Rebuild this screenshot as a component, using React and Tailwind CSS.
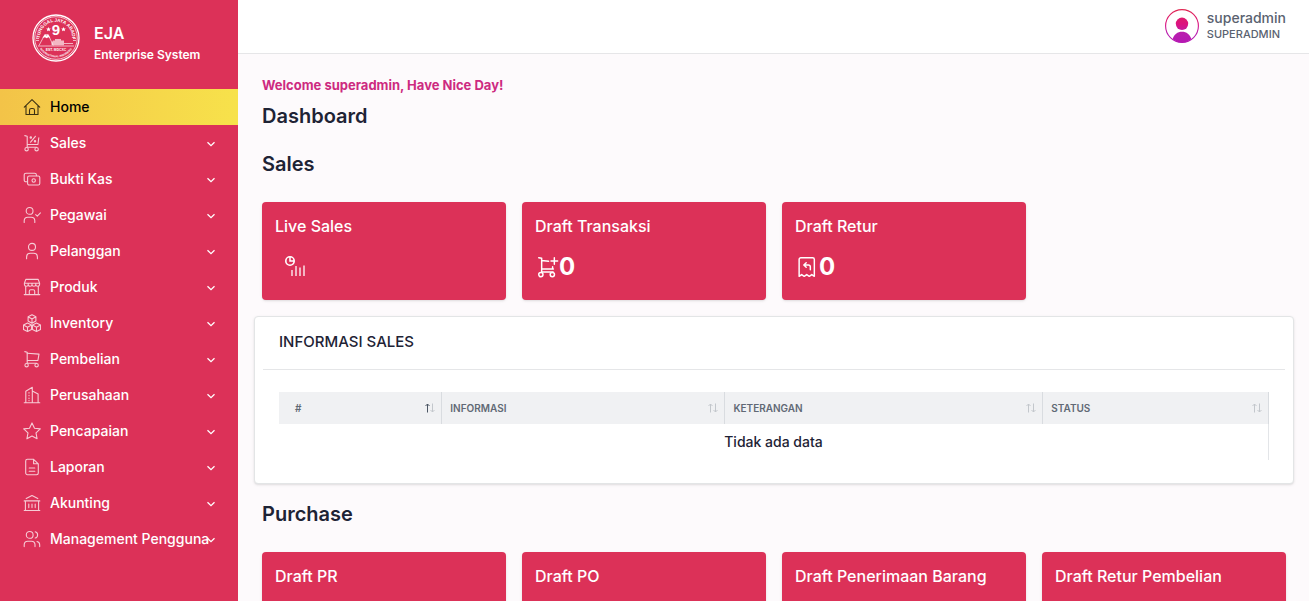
import React from "react";

function Icon({ children, className = "size-[18px]" }) {
  return (
    <svg
      viewBox="0 0 18 18"
      className={`shrink-0 ${className}`}
      fill="none"
      stroke="currentColor"
      strokeWidth="1.1"
      strokeLinecap="round"
      strokeLinejoin="round"
      aria-hidden="true"
    >
      {children}
    </svg>
  );
}

const cartBase = (
  <>
    <path d="M1.8 1.6 4.2 2.2V13.2M4.2 10.5H14.6M4.2 13.2H13.6" />
    <circle cx="3.6" cy="15.2" r="1.7" />
    <circle cx="13.6" cy="15.2" r="1.7" />
  </>
);

const icons = {
  home: <path d="M1.3 9.2 9 1.6l7.7 7.6M3 7.8v8.7h12V7.8M6.5 16.5v-4.2a1.8 1.8 0 0 1 1.8-1.8h1.4a1.8 1.8 0 0 1 1.8 1.8v4.2" />,
  sales: (
    <>
      {cartBase}
      <path d="M15.8 3.8 14.9 10.5M7.6 8.2l4.8-5.9" />
      <circle cx="7.8" cy="3.4" r=".7" />
      <circle cx="12" cy="7.3" r=".7" />
    </>
  ),
  cash: (
    <>
      <path d="M4.5 11.8H3A1.8 1.8 0 0 1 1.2 10V5A1.8 1.8 0 0 1 3 3.2h8.6A1.8 1.8 0 0 1 13.4 5v.6" />
      <rect x="4.6" y="6" width="12.2" height="9" rx="1.6" />
      <circle cx="10.7" cy="10.5" r="1.7" />
    </>
  ),
  employee: (
    <>
      <circle cx="6.6" cy="4.9" r="3.4" />
      <path d="M1.2 16.5v-1.8a3.6 3.6 0 0 1 3.6-3.5h3.4a3.6 3.6 0 0 1 3.6 3.5v1.8M12.7 8.6l1.6 1.5 3.1-3.2" />
    </>
  ),
  customer: (
    <>
      <circle cx="9" cy="4.9" r="3.5" />
      <path d="M3.6 16.7v-1.8a3.7 3.7 0 0 1 3.7-3.6h3.4a3.7 3.7 0 0 1 3.7 3.6v1.8" />
    </>
  ),
  store: (
    <path d="M1.2 16.6h15.6M2.7 8v8.6M15.3 8v8.6M6.3 16.6v-3.3a1.5 1.5 0 0 1 1.5-1.5h2.4a1.5 1.5 0 0 1 1.5 1.5v3.3M2.8 1.4h12.4l1.4 3.8H1.4zM1.4 5.2v1.2a1.9 1.9 0 0 0 3.8 0 1.9 1.9 0 0 0 3.8 0 1.9 1.9 0 0 0 3.8 0 1.9 1.9 0 0 0 3.8 0V5.2M5.2 5.2v1M9 5.2v1M12.8 5.2v1" />
  ),
  boxes: (
    <>
      <path d="m9 .7 3.9 2.1v4.3L9 9.2 5.1 7.1V2.8zM5.1 2.8 9 4.9l3.9-2.1M9 4.9v4.3" />
      <path d="m4.5 9 4 2.1v4.3l-4 2.1-4-2.1v-4.3zM.5 11.1l4 2.1 4-2.1M4.5 13.2v4.3" />
      <path d="m13.5 9 4 2.1v4.3l-4 2.1-4-2.1v-4.3zM9.5 11.1l4 2.1 4-2.1M13.5 13.2v4.3" />
    </>
  ),
  cart: (
    <>
      {cartBase}
      <path d="m4.2 3.2 11.8.9-1.1 6.4" />
    </>
  ),
  building: (
    <>
      <path d="M1.2 16.7h15.6M2.8 16.7V5.2L9.3 1.3v15.4M9.3 5l5.8 3v8.7" />
      <path d="M6 6.6v.5M6 9.3v.5M6 12v.5M6 14.4v.3" />
    </>
  ),
  star: <path d="m9 .9 2.5 5.3 5.8.7-4.3 4 1.1 5.9L9 14l-5.1 2.8L5 10.9l-4.3-4 5.8-.7z" />,
  report: (
    <path d="M10.6 1.3H4.4a1.7 1.7 0 0 0-1.7 1.7v12a1.7 1.7 0 0 0 1.7 1.7h9.2a1.7 1.7 0 0 0 1.7-1.7V5.8zM10.6 1.3v4.5h4.7M6.2 10h5.6M6.2 13.2h5.6" />
  ),
  bank: (
    <path d="M3.2 4.6 9 1.6l5.8 3M1.2 6.9h15.6M2.4 6.9v9.5M15.6 6.9v9.5M1.2 16.5h15.6M5.8 10v3.6M9 10v3.6M12.2 10v3.6" />
  ),
  users: (
    <>
      <circle cx="6.7" cy="4.9" r="3.4" />
      <path d="M1.2 16.6v-1.8a3.6 3.6 0 0 1 3.6-3.5h3.6a3.6 3.6 0 0 1 3.6 3.5v1.8M12.2 1.8a3.2 3.2 0 0 1 0 6.2M14 11.5a3.5 3.5 0 0 1 2.7 3.4v1.7" />
    </>
  ),
};

const menu = [
  ["Sales", "sales"],
  ["Bukti Kas", "cash"],
  ["Pegawai", "employee"],
  ["Pelanggan", "customer"],
  ["Produk", "store"],
  ["Inventory", "boxes"],
  ["Pembelian", "cart"],
  ["Perusahaan", "building"],
  ["Pencapaian", "star"],
  ["Laporan", "report"],
  ["Akunting", "bank"],
  ["Management Pengguna", "users"],
];

function Logo() {
  return (
    <svg viewBox="0 0 48 48" className="size-12 shrink-0" fill="none" stroke="white" role="img" aria-label="Tunggal Jaya Abadi">
      <defs>
        <path id="arc-top" d="M9.2 30.500a16.200 16.200 0 1 1 29.600 0" />
        <path id="arc-bottom" d="M5.200 29a19.500 19.500 0 0 0 37.600 0" />
      </defs>
      <circle cx="24" cy="24" r="23" strokeWidth="1.300" />
      <circle cx="24" cy="24" r="21.300" strokeWidth=".7" />
      <g fill="white" stroke="none" fontFamily="Liberation Sans, sans-serif" fontWeight="700" textAnchor="middle">
        <text fontSize="4.600"><textPath href="#arc-top" startOffset="50%">TUNGGAL JAYA ABADI</textPath></text>
        <text fontSize="2.700"><textPath href="#arc-bottom" startOffset="50%">INTERNATIONAL INDONESIA</textPath></text>
        <text x="24" y="21" fontSize="15">9</text>
        <text x="24" y="37" fontSize="3.400">EST. MDCXC</text>
        <path d="m16.500 13 .7 1.500 1.600.1-1.200 1.100.4 1.600-1.500-.8-1.500.8.4-1.600-1.200-1.100 1.600-.1zM31.500 13l.7 1.500 1.600.1-1.200 1.100.4 1.600-1.500-.8-1.500.8.4-1.600-1.200-1.100 1.600-.1z" />
        <path d="m10.500 24 2.300-3.400 1.800 1 1.500-1 2.200 3.500-2-.8-1.600 1-1.800-1.100z" />
        <path d="M21 26.500h2v-1.500h6v1.500h3v4.800H19.500v-2.600z" fillOpacity=".65" />
      </g>
      <path d="m7 31.500 5.800-10.900h3.400l5 10.900M6 32h36M32 29.500h9M4 24.500h3M4 26.500h3M41 24.500h3M41 26.500h3" strokeWidth=".65" />
    </svg>
  );
}

function Sidebar() {
  return (
    <aside className="flex w-[238px] shrink-0 flex-col bg-[#dc3158] text-white">
      <div className="flex h-[89px] items-start gap-[14px] pl-8 pt-[14px]">
        <Logo />
        <div className="pt-2 font-semibold">
          <p className="text-base leading-[22px]">EJA</p>
          <p className="text-xs leading-[22px]">Enterprise System</p>
        </div>
      </div>
      <nav>
        <a
          href="#home"
          aria-current="page"
          className="flex h-9 items-center gap-[9px] bg-linear-to-r from-[#f3c348] to-[#f7e24b] pl-[23px] text-sm font-medium text-black"
        >
          <Icon className="size-[18px] opacity-75">{icons.home}</Icon>
          Home
        </a>
        {menu.map(([label, icon]) => (
          <button
            key={label}
            type="button"
            className="flex h-9 w-full items-center gap-[9px] pl-[23px] pr-[19px] text-left text-sm font-medium"
          >
            <Icon className="size-[18px] opacity-75">{icons[icon]}</Icon>
            <span className="w-0 flex-1 whitespace-nowrap">{label}</span>
            <svg viewBox="0 0 16 16" className="size-4 shrink-0" fill="none" stroke="currentColor" strokeWidth="1.3" aria-hidden="true">
              <path d="M4.500 7.200 8 10.600 11.500 7.200" />
            </svg>
          </button>
        ))}
      </nav>
    </aside>
  );
}

function Avatar() {
  return (
    <svg viewBox="0 0 34 34" className="size-[34px]" role="img" aria-label="Profile">
      <defs>
        <linearGradient id="avatar" x1="0" y1="0" x2="0" y2="34" gradientUnits="userSpaceOnUse">
          <stop offset="0" stopColor="#e0264f" />
          <stop offset=".45" stopColor="#dc1280" />
          <stop offset=".7" stopColor="#b91fae" />
          <stop offset="1" stopColor="#b517b2" />
        </linearGradient>
      </defs>
      <circle cx="17" cy="17" r="16.400" fill="none" stroke="url(#avatar)" strokeWidth="1.100" />
      <circle cx="17" cy="14.800" r="6.200" fill="url(#avatar)" />
      <path d="M7.600 30.200C9 25.300 12.500 22.700 17 22.700s8 2.600 9.400 7.500A16.500 16.500 0 0 1 17 33.600a16.500 16.500 0 0 1-9.400-3.400z" fill="url(#avatar)" />
    </svg>
  );
}

function Card({ title, children }) {
  return (
    <a href="#detail" className="block h-[98px] rounded bg-[#dc3158] px-[13px] pt-3 text-white shadow-sm">
      <h3 className="text-base font-medium leading-6">{title}</h3>
      <div className="mt-[17px] flex h-6 items-center text-2xl font-bold">{children}</div>
    </a>
  );
}

function Sort({ active }) {
  return (
    <svg viewBox="0 0 10 10" className="size-[10px] shrink-0" fill="none" aria-hidden="true">
      <path d="M2.500 9.500V1M.5 3l2-2 2 2" stroke={active ? "#4b5563" : "#c3c7cc"} />
      <path d="M7.500 .5V9M5.500 7l2 2 2-2" stroke="#c3c7cc" />
    </svg>
  );
}

const columns = [
  ["#", "w-[16.5%] pl-4"],
  ["INFORMASI", "w-[28.6%] pl-2"],
  ["KETERANGAN", "w-[32.1%] pl-2"],
  ["STATUS", "pl-2"],
];

export default function App() {
  return (
    <div className="flex h-screen overflow-hidden bg-[#fdfafc] font-['Inter','Liberation_Sans',sans-serif] text-[#1e2335]">
      <Sidebar />
      <div className="flex min-w-0 flex-1 flex-col">
        <header className="flex h-[54px] shrink-0 items-center justify-end gap-2 border-b border-[#e6e6e8] bg-white pb-px pr-[23px]">
          <Avatar />
          <div className="text-[#5a6270]">
            <p className="text-sm font-medium leading-4">superadmin</p>
            <p className="text-[11px] font-medium leading-4">SUPERADMIN</p>
          </div>
        </header>
        <main className="min-h-0 flex-1 overflow-y-auto pb-6 pl-6 pr-[23px] pt-5 [scrollbar-width:none]">
          <p className="text-[13px] font-bold leading-[22px] text-[#cd2a80]">Welcome superadmin, Have Nice Day!</p>
          <h1 className="mt-1.5 text-xl font-semibold leading-7">Dashboard</h1>
          <h2 className="mt-5 text-xl font-semibold leading-7">Sales</h2>
          <div className="mt-6 grid grid-cols-4 gap-4">
            <Card title="Live Sales">
              <svg viewBox="0 0 24 24" className="ml-2 size-6" fill="none" stroke="currentColor" aria-hidden="true">
                <circle cx="7" cy="6" r="4.200" strokeWidth="1.600" />
                <path d="M7 2v4h4" strokeWidth="1.500" />
                <path d="M9 15v6M13 11v10M17 12.500V21M21 10.500V21" strokeWidth="1.600" strokeOpacity=".8" />
              </svg>
            </Card>
            <Card title="Draft Transaksi">
              <Icon className="size-6">
                <path d="M2.800 2 5 2.500V12.600M5 4.200l5.200.5M5 10.500h8.800M5 12.800h8.600M13.200 8.800V9.700M12 4.500h5M14.500 2v5" />
                <circle cx="4.400" cy="14.700" r="1.600" />
                <circle cx="13" cy="14.700" r="1.600" />
              </Icon>
              <span>0</span>
            </Card>
            <Card title="Draft Retur">
              <Icon className="size-6">
                <path d="M3.100 16V3.300A1.300 1.300 0 0 1 4.400 2h8.800a1.300 1.300 0 0 1 1.300 1.300V16l-1.900-1.300-1.900 1.300-1.900-1.300L6.900 16 5 14.700zM11.500 11V9a1.500 1.500 0 0 0-1.500-1.500H6.800M8.400 5.800 6.600 7.500l1.800 1.700" />
              </Icon>
              <span>0</span>
            </Card>
          </div>
          <section className="-mx-2 mt-4 rounded border border-[#e3e5e6] bg-white px-2 pb-[23px] shadow">
            <h2 className="border-b border-[#e5e6e8] px-4 pb-[15px] pt-[13px] text-[15px] font-medium leading-6">INFORMASI SALES</h2>
            <div className="px-4 pt-[22px]">
              <table className="w-full table-fixed border-separate border-spacing-0">
                <thead>
                  <tr>
                    {columns.map(([label, style], i) => (
                      <th
                        key={label}
                        scope="col"
                        className={`h-8 border-r border-[#d9dce0] bg-[#f0f1f3] p-0 pr-1.5 text-left text-[10px] font-semibold text-[#616975] ${style}`}
                      >
                        <button type="button" className="flex w-full items-center justify-between">
                          {label}
                          <Sort active={i === 0} />
                        </button>
                      </th>
                    ))}
                  </tr>
                </thead>
                <tbody>
                  <tr>
                    <td colSpan={4} className="h-9 border-r border-[#e3e5e8] p-0 text-center text-sm font-medium">
                      Tidak ada data
                    </td>
                  </tr>
                </tbody>
              </table>
            </div>
          </section>
          <h2 className="mt-4 text-xl font-semibold leading-7">Purchase</h2>
          <div className="mt-6 grid grid-cols-4 gap-4">
            <Card title="Draft PR" />
            <Card title="Draft PO" />
            <Card title="Draft Penerimaan Barang" />
            <Card title="Draft Retur Pembelian" />
          </div>
        </main>
      </div>
    </div>
  );
}
